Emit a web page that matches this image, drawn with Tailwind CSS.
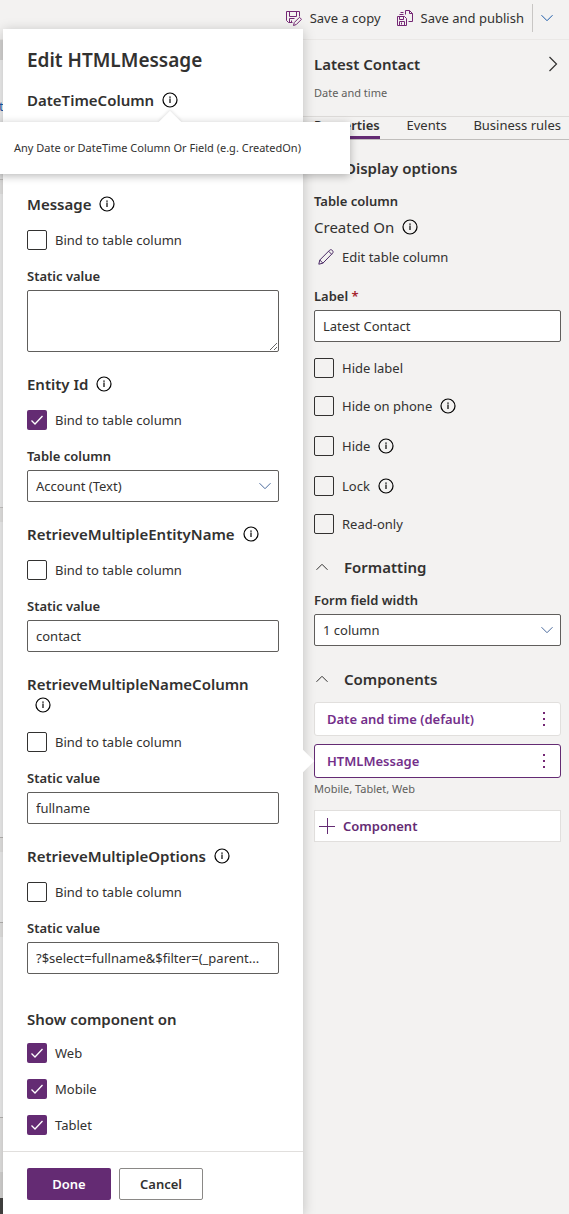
<!DOCTYPE html>
<html lang="en">
<head>
<meta charset="utf-8">
<meta name="viewport" content="width=device-width, initial-scale=1">
<title>Edit HTMLMessage</title>
<script src="https://cdn.jsdelivr.net/npm/@tailwindcss/browser@4"></script>
</head>
<body class="bg-[#f3f2f1] font-['Noto_Sans','Open_Sans',sans-serif] text-[13px] leading-5 text-[#323130]">
<svg class="hidden" aria-hidden="true">
  <symbol id="info" viewBox="0 0 16 16"><circle cx="8" cy="8" r="7" fill="none" stroke="currentColor" stroke-width="1.2"/><path d="M8 6.6V11" stroke="currentColor" stroke-width="1.2"/><path d="M7.3 4.6h1.4v1.2H7.3z" fill="currentColor"/></symbol>
  <symbol id="down" viewBox="0 0 12 12"><path d="M.5 3.2 6 8.7l5.500-5.500" fill="none" stroke="currentColor"/></symbol>
  <symbol id="up" viewBox="0 0 12 12"><path d="M.5 8.800 6 3.300l5.500 5.500" fill="none" stroke="currentColor"/></symbol>
  <symbol id="check" viewBox="0 0 20 20"><path d="m4.500 10.500 3.500 3.500 7.500-8" fill="none" stroke="currentColor" stroke-width="1.300"/></symbol>
  <symbol id="dots" viewBox="0 0 4 16"><path d="M1 1h2v2H1zM1 7h2v2H1zM1 13h2v2H1z" fill="currentColor"/></symbol>
</svg>

<div class="flex min-h-screen flex-col">
  <header class="flex h-10 items-center justify-end border-b border-[#eae8e6] pb-1 whitespace-nowrap">
    <button class="flex items-center gap-2">
      <svg class="size-4 text-[#742774]" viewBox="0 0 16 16" fill="none" stroke="currentColor"><path d="M6.500 12.500H2.500L.5 10.500V1.500h13v5M3.500 1.500v5h7v-5M3.500 12.500v-4h5M5.500 12.500v-2"/><path d="m7.500 15.500.8-3 5.200-5.200 2 2-5.200 5.200z"/></svg>
      Save a copy
    </button>
    <button class="ml-4 flex items-center gap-2">
      <svg class="size-4 text-[#742774]" viewBox="0 0 16 16" fill="none" stroke="currentColor"><path d="M.5 6.500h7l2 2v7h-9zM2.500 6.500v3h4v-3M2.500 15.500v-4h5v4M4.500 12.500v2"/><path d="M8.500 4.500v-4h4l3 3v8h-4M12.500.5v3h3M3.500 2.500h3M2.500 4.500h4"/></svg>
      Save and publish
    </button>
    <div class="mx-2 h-7 w-px bg-[#c8c6c4]"></div>
    <button class="mr-4 text-[#1b5aa8]" aria-label="More save options"><svg class="size-3"><use href="#down"/></svg></button>
  </header>

  <div class="flex flex-1">
    <!-- Sliver of the form canvas left of the dialog -->
    <div class="flex w-[3px] flex-col overflow-hidden bg-[#e6e5e4]" aria-hidden="true">
      <div class="h-5 bg-[#d6d5d4]"></div>
      <div class="h-[120px] border-b border-[#c8c6c4] bg-[#f0f0f0] pt-9"><span class="block w-[3px] text-[#1b5aa8]"><span class="-ml-px">t</span></span></div>
      <div class="mt-[14px] h-[314px] border-b border-[#c8c6c4] bg-[#f0f0f0]"></div>
      <div class="mt-[14px] h-[316px] border-b border-[#b8b6b4] bg-[#f0f0f0]"></div>
      <div class="mt-[14px] h-[71px] border-b border-[#b8b6b4] bg-[#f0f0f0]"></div>
      <div class="mt-[14px] h-[181px] border-b border-[#b8b6b4] bg-[#f0f0f0]"></div>
      <div class="mt-[54px] h-[26px] bg-[#d6d5d4]"></div>
      <div class="flex-1 bg-[#444342]"></div>
    </div>

    <div role="dialog" aria-labelledby="dlg" class="relative z-10 -mt-[11px] flex w-[300px] shrink-0 flex-col bg-white shadow-[0_2px_12px_rgba(0,0,0,0.22)]">
      <div class="absolute top-[724px] -right-2 size-4 rotate-45 bg-white" aria-hidden="true"></div>
      <div class="relative flex flex-1 flex-col px-6 pt-4 pb-4">
        <h1 id="dlg" class="text-[19px] leading-[30px] font-semibold">Edit HTMLMessage</h1>

        <section class="relative mt-[15px] mb-[84px]">
          <h2 class="flex items-center gap-2 text-[15px] font-semibold">DateTimeColumn
            <button aria-label="About DateTimeColumn" aria-describedby="tip" class="text-black"><svg class="size-4"><use href="#info"/></svg></button></h2>
          <div id="tip" role="tooltip" class="absolute top-8 -left-[30px] z-20 flex h-[52px] w-[353px] items-center rounded-sm bg-white pl-[17px] text-[11px] whitespace-nowrap shadow-[0_2px_8px_rgba(0,0,0,0.28)]">
            <span class="absolute -top-2 left-[165px] size-4 rotate-45 bg-white shadow-[-1px_-1px_3px_rgba(0,0,0,0.100)]"></span>
            <span class="absolute inset-0 bg-white"></span>
            <span class="relative">Any Date or DateTime Column Or Field (e.g. CreatedOn)</span>
          </div>
        </section>

        <section class="mb-[22px]">
          <h2 class="flex items-center gap-2 text-[15px] font-semibold">Message
            <button aria-label="About Message" class="text-black"><svg class="size-4"><use href="#info"/></svg></button></h2>
          <label class="mt-4 flex items-center gap-2"><input type="checkbox" class="size-5 appearance-none rounded-xs border border-[#323130]">Bind to table column</label>
          <label for="msg" class="mt-4 block font-semibold">Static value</label>
          <textarea id="msg" class="mt-1 block h-[62px] w-full rounded-xs border border-[#605e5c] px-2"></textarea>
        </section>

        <section class="mb-[22px]">
          <h2 class="flex items-center gap-2 text-[15px] font-semibold">Entity Id
            <button aria-label="About Entity Id" class="text-black"><svg class="size-4"><use href="#info"/></svg></button></h2>
          <label class="mt-4 flex items-center gap-2"><span class="grid"><input type="checkbox" checked class="col-start-1 row-start-1 size-5 appearance-none rounded-xs bg-[#642b73]"><svg class="pointer-events-none col-start-1 row-start-1 size-5 text-white"><use href="#check"/></svg></span>Bind to table column</label>
          <label for="tc" class="mt-4 block font-semibold">Table column</label>
          <div class="mt-1 grid items-center">
            <select id="tc" class="col-start-1 row-start-1 h-8 w-full appearance-none rounded-xs border border-[#605e5c] px-2"><option>Account (Text)</option></select>
            <svg class="pointer-events-none col-start-1 row-start-1 mr-2 size-3 justify-self-end text-[#4a6a9c]"><use href="#down"/></svg>
          </div>
        </section>

        <section class="mb-[22px]">
          <h2 class="flex items-center gap-2 text-[15px] font-semibold">RetrieveMultipleEntityName
            <button aria-label="About RetrieveMultipleEntityName" class="text-black"><svg class="size-4"><use href="#info"/></svg></button></h2>
          <label class="mt-4 flex items-center gap-2"><input type="checkbox" class="size-5 appearance-none rounded-xs border border-[#323130]">Bind to table column</label>
          <label for="en" class="mt-4 block font-semibold">Static value</label>
          <input id="en" type="text" value="contact" class="mt-1 block h-8 w-full rounded-xs border border-[#605e5c] px-2">
        </section>

        <section class="mb-[22px]">
          <h2 class="flex flex-col text-[15px] font-semibold">RetrieveMultipleNameColumn
            <button aria-label="About RetrieveMultipleNameColumn" class="my-[3px] ml-2 self-start text-black"><svg class="size-4"><use href="#info"/></svg></button></h2>
          <label class="mt-4 flex items-center gap-2"><input type="checkbox" class="size-5 appearance-none rounded-xs border border-[#323130]">Bind to table column</label>
          <label for="nc" class="mt-4 block font-semibold">Static value</label>
          <input id="nc" type="text" value="fullname" class="mt-1 block h-8 w-full rounded-xs border border-[#605e5c] px-2">
        </section>

        <section>
          <h2 class="flex items-center gap-2 text-[15px] font-semibold">RetrieveMultipleOptions
            <button aria-label="About RetrieveMultipleOptions" class="text-black"><svg class="size-4"><use href="#info"/></svg></button></h2>
          <label class="mt-4 flex items-center gap-2"><input type="checkbox" class="size-5 appearance-none rounded-xs border border-[#323130]">Bind to table column</label>
          <label for="op" class="mt-4 block font-semibold">Static value</label>
          <input id="op" type="text" value="?$select=fullname&amp;$filter=(_parent..." class="mt-1 block h-8 w-full rounded-xs border border-[#605e5c] px-2">
        </section>

        <fieldset class="mt-[35px]">
          <legend class="text-[15px] font-semibold">Show component on</legend>
          <div class="mt-[14px] flex flex-col gap-4">
            <label class="flex items-center gap-2"><span class="grid"><input type="checkbox" checked class="col-start-1 row-start-1 size-5 appearance-none rounded-xs bg-[#642b73]"><svg class="pointer-events-none col-start-1 row-start-1 size-5 text-white"><use href="#check"/></svg></span>Web</label>
            <label class="flex items-center gap-2"><span class="grid"><input type="checkbox" checked class="col-start-1 row-start-1 size-5 appearance-none rounded-xs bg-[#642b73]"><svg class="pointer-events-none col-start-1 row-start-1 size-5 text-white"><use href="#check"/></svg></span>Mobile</label>
            <label class="flex items-center gap-2"><span class="grid"><input type="checkbox" checked class="col-start-1 row-start-1 size-5 appearance-none rounded-xs bg-[#642b73]"><svg class="pointer-events-none col-start-1 row-start-1 size-5 text-white"><use href="#check"/></svg></span>Tablet</label>
          </div>
        </fieldset>
      </div>
      <footer class="flex gap-2 border-t border-[#e1dfdd] px-6 pt-4 pb-[14px]">
        <button class="h-8 w-[84px] rounded-xs bg-[#642b73] font-semibold text-white">Done</button>
        <button class="h-8 w-[84px] rounded-xs border border-[#8a8886] font-semibold">Cancel</button>
      </footer>
    </div>

    <aside class="min-w-0 flex-1">
      <div class="flex items-center justify-between pt-[14px] pr-2 pl-[11px]">
        <h2 class="text-[15px] font-semibold">Latest Contact</h2>
        <button aria-label="Collapse pane"><svg class="size-4 text-[#323130]" viewBox="0 0 16 16"><path d="m4.500 1 7 7-7 7" fill="none" stroke="currentColor" stroke-width="1.200"/></svg></button>
      </div>
      <p class="mt-[9px] pl-[11px] text-[11px] text-[#605e5c]">Date and time</p>
      <nav class="mt-[13px] flex h-6 justify-between border-y border-t-[#dddbd9] border-b-[#c0bebc] pr-2 pl-[11px] whitespace-nowrap" aria-label="Pane tabs">
        <button class="flex h-[22px] items-start border-b-3 border-[#642b73] leading-4 font-semibold">Properties</button>
        <button class="flex leading-4">Events</button>
        <button class="flex leading-4">Business rules</button>
      </nav>

      <div class="pr-2 pl-[11px]">
        <button class="mt-[18px] flex items-center gap-4 text-[15px] font-semibold" aria-expanded="true"><svg class="ml-[3px] size-3"><use href="#up"/></svg>Display options</button>
        <h3 class="mt-[13px] font-semibold">Table column</h3>
        <div class="mt-[6px] flex items-center gap-2 text-[15px]">Created On
          <button aria-label="About Created On" class="text-black"><svg class="size-4"><use href="#info"/></svg></button></div>
        <button class="mt-[10px] flex items-center gap-2 pl-1">
          <svg class="size-4 text-[#4b2a66]" viewBox="0 0 16 16" fill="none" stroke="currentColor"><path d="m.8 15.200 1-4.200L11.600 1.200c1.800-1.600 4.600 1.200 3 3L4.900 14.200zM1.800 11l3.100 3.200M10.600 2.200l3.100 3.100"/></svg>
          Edit table column</button>

        <label for="lb" class="mt-[19px] block font-semibold">Label <span class="text-[#a4262c]">*</span></label>
        <input id="lb" type="text" value="Latest Contact" class="mt-1 block h-8 w-full rounded-xs border border-[#605e5c] bg-white px-2">

        <label class="mt-4 flex items-center gap-2"><input type="checkbox" class="size-5 appearance-none rounded-xs border border-[#323130]">Hide label</label>
        <div class="mt-[18px] flex items-center gap-2"><label class="flex items-center gap-2"><input type="checkbox" class="size-5 appearance-none rounded-xs border border-[#323130]">Hide on phone</label>
          <button aria-label="About Hide on phone" class="text-black"><svg class="size-4"><use href="#info"/></svg></button></div>
        <div class="mt-5 flex items-center gap-2"><label class="flex items-center gap-2"><input type="checkbox" class="size-5 appearance-none rounded-xs border border-[#323130]">Hide</label>
          <button aria-label="About Hide" class="text-black"><svg class="size-4"><use href="#info"/></svg></button></div>
        <div class="mt-5 flex items-center gap-2"><label class="flex items-center gap-2"><input type="checkbox" class="size-5 appearance-none rounded-xs border border-[#323130]">Lock</label>
          <button aria-label="About Lock" class="text-black"><svg class="size-4"><use href="#info"/></svg></button></div>
        <label class="mt-[18px] flex items-center gap-2"><input type="checkbox" class="size-5 appearance-none rounded-xs border border-[#323130]">Read-only</label>

        <button class="mt-[23px] flex items-center gap-4 text-[15px] font-semibold" aria-expanded="true"><svg class="ml-[2px] size-3"><use href="#up"/></svg>Formatting</button>
        <label for="fw" class="mt-[13px] block font-semibold">Form field width</label>
        <div class="mt-1 grid items-center">
          <select id="fw" class="col-start-1 row-start-1 h-8 w-full appearance-none rounded-xs border border-[#605e5c] bg-white px-2"><option>1 column</option></select>
          <svg class="pointer-events-none col-start-1 row-start-1 mr-2 size-3 justify-self-end text-[#4a6a9c]"><use href="#down"/></svg>
        </div>

        <button class="mt-[23px] flex items-center gap-4 text-[15px] font-semibold" aria-expanded="true"><svg class="ml-[2px] size-3"><use href="#up"/></svg>Components</button>
        <div class="mt-[13px] flex h-[34px] items-center justify-between rounded-[3px] border border-[#e1dfdd] bg-white pr-[14px] pl-3 font-semibold text-[#742f8a]">
          <button>Date and time (default)</button><button aria-label="Date and time options"><svg class="h-4 w-1 text-[#742774]"><use href="#dots"/></svg></button></div>
        <div class="mt-2 flex h-[34px] items-center justify-between rounded-[3px] border border-[#642b73] bg-white pr-[14px] pl-3 font-semibold text-[#742f8a]">
          <button>HTMLMessage</button><button aria-label="HTMLMessage options"><svg class="h-4 w-1 text-[#742774]"><use href="#dots"/></svg></button></div>
        <p class="mt-px text-[11px] text-[#605e5c]">Mobile, Tablet, Web</p>
        <button class="mt-[11px] flex h-8 w-full items-center gap-2 border border-[#e1dfdd] bg-white pl-1 font-semibold text-[#642b73]">
          <svg class="size-4" viewBox="0 0 16 16"><path d="M0 8.500h16M8.500 0v16" stroke="currentColor"/></svg>Component</button>
      </div>
    </aside>
  </div>
</div>
</body>
</html>
